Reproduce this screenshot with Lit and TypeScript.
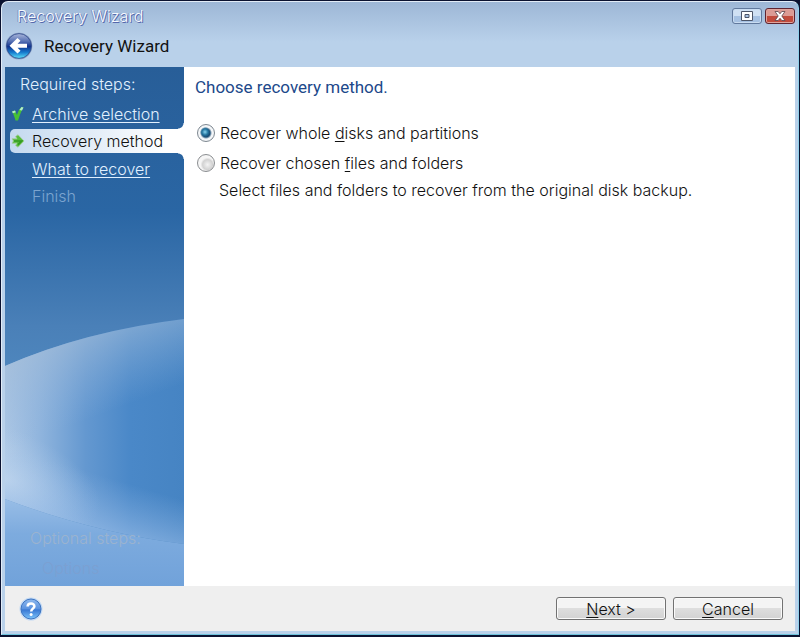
import { LitElement, html, svg, css } from "lit";
import { customElement, state } from "lit/decorators.js";

const backIcon = html`<svg width="28" height="28" viewBox="0 0 28 28" aria-hidden="true">
  <defs>
    <linearGradient id="bk" x1="0" y1="0" x2="0" y2="1">
      <stop offset="0" stop-color="#a9b6da" /><stop offset=".3" stop-color="#5a74b6" />
      <stop offset=".52" stop-color="#12348f" /><stop offset=".75" stop-color="#1478cc" />
      <stop offset="1" stop-color="#5fe4fa" />
    </linearGradient>
  </defs>
  <circle cx="14" cy="14" r="13.3" fill="#8296bd" />
  <circle cx="14" cy="14" r="12.4" fill="url(#bk)" stroke="#2d4a8c" stroke-width=".8" />
  <path d="M4.5 13.8 L12.5 6 L15.5 8.8 L12.6 11.8 H22 V15.8 H12.6 L15.5 18.8 L12.5 21.6 Z" fill="#fff" />
</svg>`;

const helpIcon = html`<svg width="24" height="24" viewBox="0 0 24 24" aria-hidden="true">
  <defs>
    <linearGradient id="hp" x1="0" y1="0" x2="0" y2="1">
      <stop offset="0" stop-color="#8fb9ee" /><stop offset=".48" stop-color="#5b93e0" />
      <stop offset=".55" stop-color="#3a79d4" /><stop offset="1" stop-color="#7cc4fa" />
    </linearGradient>
  </defs>
  <circle cx="12" cy="12" r="11.5" fill="#c4daf4" />
  <circle cx="12" cy="12" r="10" fill="url(#hp)" stroke="#3d74c0" />
  <path d="M8.6 9.4 C8.6 5.4 15.6 5.4 15.4 9.4 C15.3 11.6 12.2 11.8 12.2 14.4" fill="none" stroke="#fff" stroke-width="2.5" />
  <circle cx="12.1" cy="17.5" r="1.5" fill="#fff" />
</svg>`;

const checkIcon = html`<svg width="14" height="16" viewBox="0 0 14 16" aria-hidden="true">
  <path d="M1 5.5 L4 4.5 L6 9 C7 5.5 8.5 2.5 10.5 1 L12.5 1.5 C10 5.5 8.5 10 7 14.5 L4.5 14.5 C3.6 11 2.5 8 1 5.5 Z" fill="#46c234" />
  <path d="M1 5.5 L4 4.5 L4.8 6.3 L1.9 7.3 Z M8.4 4 L10.5 1 L12.5 1.5 L11 4.4 Z" fill="#b5eccb" />
</svg>`;

const arrowIcon = html`<svg width="14" height="14" viewBox="0 0 14 14" aria-hidden="true">
  <path d="M1 4.8 H6 L4.6 2.6 L7 .8 L13 7 L7 13.2 L4.6 11.4 L6 9.2 H1 L2.4 7 Z" fill="#58bd3c" stroke="#a5cc9e" stroke-width=".8" />
  <path d="M3 7 H10.5 L7 10.6" fill="none" stroke="#349a22" stroke-width="1.6" />
</svg>`;

const lensPath = "M0 299 Q80 264 179 252 V477 Q90 466 0 432 Z";

const backdrop = svg`
  <defs>
    <linearGradient id="lens" x1="0" y1="0" x2="1" y2="0">
      <stop offset="0" stop-color="#aec8e5" /><stop offset=".2" stop-color="#8fb4dd" />
      <stop offset=".45" stop-color="#6498d0" /><stop offset=".7" stop-color="#4a88c8" />
      <stop offset="1" stop-color="#4684c3" />
    </linearGradient>
    <linearGradient id="rim" gradientUnits="userSpaceOnUse" x1="60" y1="270" x2="90" y2="350">
      <stop offset="0" stop-color="#a2bcd8" stop-opacity=".7" /><stop offset="1" stop-color="#8fb3dc" stop-opacity="0" />
    </linearGradient>
    <radialGradient id="glow" gradientUnits="userSpaceOnUse" cx="0" cy="0" r="1" gradientTransform="translate(0 412) rotate(20) scale(100 50)">
      <stop offset="0" stop-color="#cfe0f2" stop-opacity=".55" /><stop offset="1" stop-color="#b5d0ee" stop-opacity="0" />
    </radialGradient>
    <linearGradient id="edge" gradientUnits="userSpaceOnUse" x1="102" y1="410" x2="84" y2="470">
      <stop offset="0" stop-color="#8fb6e4" stop-opacity="0" /><stop offset="1" stop-color="#94bae6" stop-opacity=".85" />
    </linearGradient>
    <linearGradient id="low" x1="0" y1="0" x2="0" y2="1">
      <stop offset="0" stop-color="#98bde6" /><stop offset=".4" stop-color="#7dabde" /><stop offset="1" stop-color="#71a2da" />
    </linearGradient>
  </defs>
  <path d=${lensPath} fill="url(#lens)" />
  <path d=${lensPath} fill="url(#rim)" />
  <path d=${lensPath} fill="url(#edge)" />
  <path d=${lensPath} fill="url(#glow)" />
  <path d="M0 432 Q90 466 179 477 V519 H0 Z" fill="url(#low)" />`;

@customElement("app-root")
export class AppRoot extends LitElement {
  @state() private method = "disks";

  static styles = css`
    :host {
      display: block;
      background: #0a1230;
      font: 300 16px/20px Inter, "Liberation Sans", Arial, sans-serif;
      color: #111;
    }
    * { box-sizing: border-box; }
    .window {
      min-height: calc(100vh - 3px);
      display: flex;
      flex-direction: column;
      padding: 0 3px 3px;
      border: 1px solid #e2ecf7;
      border-right-color: #8fd0ea;
      border-bottom-color: #6fc3dc;
      border-radius: 7px 7px 0 0;
      background: linear-gradient(#9db7d6, #b9d1ea 40px, #b9d1ea);
    }
    .shell { padding: 1px 1px 2px; }
    .titlebar {
      display: flex;
      align-items: center;
      justify-content: space-between;
      height: 28px;
      padding-left: 12px;
    }
    .title {
      color: #f6faff;
      text-shadow: 1px 1px 0 #5568ac, -1px 0 0 #7d90c4;
    }
    .controls { display: flex; gap: 3px; }
    .control {
      width: 30px;
      height: 16px;
      display: grid;
      place-items: center;
      padding: 0;
      border: 1px solid #61799d;
      border-radius: 3px;
      background: linear-gradient(#cfe0f3 50%, #a6c1e2 50%);
      box-shadow: inset 0 0 0 1px #c9dcf1;
    }
    .control.close {
      border-color: #5f2430;
      background: linear-gradient(#dc9b94 50%, #c14b3c 50%);
      box-shadow: inset 0 0 0 1px #dfa59d;
    }
    .header {
      display: flex;
      align-items: center;
      gap: 11px;
      height: 37px;
      padding: 0 0 6px;
    }
    .back, .help { display: block; padding: 0; border: 0; background: none; }
    svg { display: block; }
    h1, h2 {
      margin: 0;
      font: 17px/24px Roboto, "Liberation Sans", sans-serif;
    }
    h2 { color: #20488a; }
    .body {
      flex: 1;
      display: flex;
      background: #fff;
    }
    .sidebar {
      position: relative;
      width: 179px;
      flex: none;
      display: flex;
      flex-direction: column;
      padding: 7px 0 8px 5px;
      color: #e1f0ff;
      background: linear-gradient(#285e98, #2a66a4 28%, #4a80b8 50%, #4e86bd 58%);
    }
    .backdrop { position: absolute; inset: 0; width: 100%; height: 100%; }
    .caption { margin: 0; padding: 0 0 6px 10px; position: relative; }
    .steps { position: relative; margin: 0; padding: 0; list-style: none; }
    .step {
      display: flex;
      align-items: center;
      height: 27px;
      gap: 7px;
    }
    .mark { width: 15px; display: grid; place-items: center; }
    .step a { color: inherit; text-underline-offset: 2px; }
    .current {
      position: relative;
      height: 24px;
      margin: 2px 0;
      color: #111;
      border-radius: 5px 0 0 5px;
      background: linear-gradient(90deg, #c4d9ef, #fff 90%);
    }
    .current::before, .current::after {
      content: "";
      position: absolute;
      right: 0;
      width: 6px;
      height: 6px;
    }
    .current::before { bottom: 100%; background: radial-gradient(circle at 0 0, transparent 5px, #fff 6px); }
    .current::after { top: 100%; background: radial-gradient(circle at 0 100%, transparent 5px, #fff 6px); }
    .pending { color: #7ba4cf; }
    .optional { position: relative; margin: auto 0 0; padding-left: 20px; color: #9bb3cf; }
    .optional p { margin: 0 0 10px; }
    .optional .sub { margin: 0; padding-left: 12px; color: #7ba0d2; }
    .content { flex: 1; padding: 8px 11px; }
    .choices { margin: 19px 0 0; padding: 0 0 0 2px; border: 0; }
    .choice { display: flex; align-items: center; gap: 5px; height: 30px; }
    input {
      appearance: none;
      width: 18px;
      height: 18px;
      margin: 0;
      border: 1px solid #8a8d90;
      border-radius: 50%;
      background: radial-gradient(circle at 60% 60%, #f4f4f4, #d2d2d2 5px, #f6f6f6 7px);
    }
    input:checked {
      border-color: #7d8790;
      background: radial-gradient(circle at 7px 7px, #8ad4f0 0, #24749e 3px, transparent 5px),
        radial-gradient(circle, #1a4c74 4px, #f4f6f8 6px);
    }
    u { text-underline-offset: 2px; }
    .hint { margin: 2px 0 0 22px; }
    .footer {
      display: flex;
      align-items: center;
      gap: 7px;
      height: 45px;
      padding: 0 12px 0 14px;
      background: #efefef;
    }
    .help { margin-right: auto; }
    .push {
      width: 110px;
      height: 23px;
      padding: 0;
      border: 1px solid #727272;
      border-radius: 3px;
      color: inherit;
      font: inherit;
      background: linear-gradient(#f4f4f4 50%, #dedede 50%, #d2d2d2);
      box-shadow: inset 0 0 0 1px #fafafa;
    }
  `;

  private pick(e: Event) {
    this.method = (e.target as HTMLInputElement).value;
  }

  render() {
    return html`<div class="shell">
      <div class="window">
        <div class="titlebar">
          <span class="title">Recovery Wizard</span>
          <div class="controls">
            <button class="control" aria-label="Maximize">
              <svg width="12" height="10" viewBox="0 0 12 10"><path d="M.5 .5h11v9h-11z" fill="#fff" stroke="#4c5568" /><path d="M4 3.5h4v3h-4z" fill="#a9c3e2" stroke="#4c5568" /></svg>
            </button>
            <button class="control close" aria-label="Close">
              <svg width="12" height="10" viewBox="0 0 12 10"><path d="M1 .5h3.2L6 2.8 7.8 .5H11L7.8 5 11 9.5H7.8L6 7.2 4.2 9.5H1L4.2 5z" fill="#fff" stroke="#59424a" stroke-width=".8" /></svg>
            </button>
          </div>
        </div>
        <header class="header">
          <button class="back" aria-label="Back">${backIcon}</button>
          <h1>Recovery Wizard</h1>
        </header>
        <div class="body">
          <nav class="sidebar">
            <svg class="backdrop" viewBox="0 0 179 519" preserveAspectRatio="none" aria-hidden="true">${backdrop}</svg>
            <p class="caption">Required steps:</p>
            <ol class="steps">
              <li class="step"><span class="mark">${checkIcon}</span><a href="#archive">Archive selection</a></li>
              <li class="step current" aria-current="step"><span class="mark">${arrowIcon}</span>Recovery method</li>
              <li class="step"><span class="mark"></span><a href="#what">What to recover</a></li>
              <li class="step pending"><span class="mark"></span>Finish</li>
            </ol>
            <div class="optional"><p>Optional steps:</p><p class="sub">Options</p></div>
          </nav>
          <main class="content">
            <h2>Choose recovery method.</h2>
            <fieldset class="choices" aria-label="Recovery method">
              <label class="choice"><input type="radio" name="method" value="disks" .checked=${this.method === "disks"} @change=${this.pick} />
                <span>Recover whole <u>d</u>isks and partitions</span></label>
              <label class="choice"><input type="radio" name="method" value="files" aria-describedby="hint" .checked=${this.method === "files"} @change=${this.pick} />
                <span>Recover chosen <u>f</u>iles and folders</span></label>
              <p class="hint" id="hint">Select files and folders to recover from the original disk backup.</p>
            </fieldset>
          </main>
        </div>
        <footer class="footer">
          <button class="help" aria-label="Help">${helpIcon}</button>
          <button class="push"><u>N</u>ext &gt;</button>
          <button class="push"><u>C</u>ancel</button>
        </footer>
      </div>
    </div>`;
  }
}
